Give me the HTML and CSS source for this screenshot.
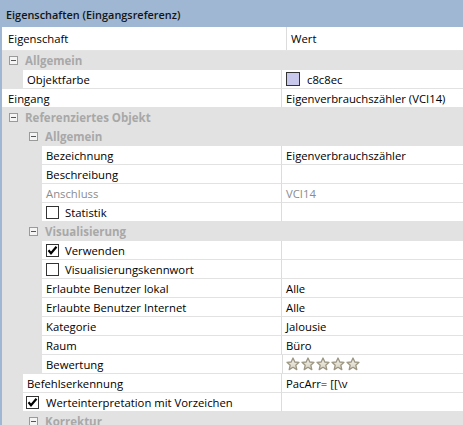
FILE: index.html
```html
<!DOCTYPE html>
<html>
<head>
<meta charset="utf-8">
<link rel="stylesheet" href="styles.css">
</head>
<body>
<div class="panel">
  <div class="title">Eigenschaften (Eingangsreferenz)</div>
  <div class="grid">
    <div class="head"><div class="hn">Eigenschaft</div><div class="hv">Wert</div></div>

    <div class="cat l1"><span class="minus"></span><span class="ct">Allgemein</span></div>
    <div class="row l1"><div class="ind"></div><div class="n">Objektfarbe</div><div class="v"><span class="swatch"></span><span class="sw-t">c8c8ec</span></div></div>
    <div class="row l0"><div class="ind"></div><div class="n">Eingang</div><div class="v">Eigenverbrauchszähler (VCI14)</div></div>
    <div class="cat l1"><span class="minus"></span><span class="ct">Referenziertes Objekt</span></div>
    <div class="cat l2"><span class="minus"></span><span class="ct">Allgemein</span></div>
    <div class="row l2"><div class="ind"></div><div class="n">Bezeichnung</div><div class="v">Eigenverbrauchszähler</div></div>
    <div class="row l2"><div class="ind"></div><div class="n">Beschreibung</div><div class="v"></div></div>
    <div class="row l2 dis"><div class="ind"></div><div class="n">Anschluss</div><div class="v">VCI14</div></div>
    <div class="row l2"><div class="ind"></div><div class="n cb"><span class="box"></span>Statistik</div><div class="v"></div></div>
    <div class="cat l2"><span class="minus"></span><span class="ct">Visualisierung</span></div>
    <div class="row l2"><div class="ind"></div><div class="n cb"><span class="box on"><svg viewBox="0 0 13 13" width="13" height="13"><path d="M2.5 6.3 L5 9.2 L10.5 2.8" fill="none" stroke="#000" stroke-width="2.2"/></svg></span>Verwenden</div><div class="v"></div></div>
    <div class="row l2"><div class="ind"></div><div class="n cb"><span class="box"></span>Visualisierungskennwort</div><div class="v"></div></div>
    <div class="row l2"><div class="ind"></div><div class="n">Erlaubte Benutzer lokal</div><div class="v">Alle</div></div>
    <div class="row l2"><div class="ind"></div><div class="n">Erlaubte Benutzer Internet</div><div class="v">Alle</div></div>
    <div class="row l2"><div class="ind"></div><div class="n">Kategorie</div><div class="v">Jalousie</div></div>
    <div class="row l2"><div class="ind"></div><div class="n">Raum</div><div class="v">Büro</div></div>
    <div class="row l2"><div class="ind"></div><div class="n">Bewertung</div><div class="v stars">
      <svg width="76" height="14" viewBox="0 0 76 14">
        <defs>
          <linearGradient id="sg" x1="0" y1="0" x2="0" y2="1">
            <stop offset="0" stop-color="#f4f2ea"/>
            <stop offset="1" stop-color="#d6d2c2"/>
          </linearGradient>
          <polygon id="st" points="7,1 8.8,5 13,5.3 9.8,8.2 10.8,12.6 7,10.3 3.2,12.6 4.2,8.2 1,5.3 5.2,5" fill="url(#sg)" stroke="#9c9682" stroke-width="1.3" stroke-linejoin="round"/>
        </defs>
        <use href="#st" x="0"/>
        <use href="#st" x="15"/>
        <use href="#st" x="30"/>
        <use href="#st" x="45"/>
        <use href="#st" x="60"/>
      </svg>
    </div></div>
    <div class="row l1"><div class="ind"></div><div class="n">Befehlserkennung</div><div class="v">PacArr= [[\v</div></div>
    <div class="row l1"><div class="ind"></div><div class="n cb"><span class="box on"><svg viewBox="0 0 13 13" width="13" height="13"><path d="M2.5 6.3 L5 9.2 L10.5 2.8" fill="none" stroke="#000" stroke-width="2.2"/></svg></span>Werteinterpretation mit Vorzeichen</div><div class="v"></div></div>
    <div class="cat l2"><span class="minus"></span><span class="ct">Korrektur</span></div>
  </div>
</div>
</body>
</html>
```
FILE: styles.css
```css
html, body {
  margin: 0;
  padding: 0;
  background: #ffffff;
}
body {
  font-family: "Open Sans", "Noto Sans", sans-serif;
  font-size: 11.3px;
  color: #000;
  width: 463px;
  height: 425px;
  overflow: hidden;
}
.panel {
  border-left: 2px solid #9fb7d2;
  height: 425px;
  box-sizing: border-box;
}
.title {
  height: 27px;
  margin-left: -2px;
  padding-left: 6px;
  padding-top: 1px;
  box-sizing: border-box;
  background: #9fb7d2;
  display: flex;
  align-items: center;
  font-weight: 600;
  font-size: 10.9px;
  color: #141414;
  white-space: nowrap;
}
.grid {
  display: flex;
  flex-direction: column;
}
.head {
  display: flex;
  height: 23px;
  border-bottom: 1px solid #e4e4e4;
  background: #fff;
}
.hn {
  width: 278px;
  padding-left: 6px;
  border-right: 1px solid #dcdcdc;
  display: flex;
  align-items: center;
}
.hv {
  flex: 1;
  padding-left: 4px;
  display: flex;
  align-items: center;
}
.cat {
  height: 19px;
  background: #e2e2e2;
  display: flex;
  align-items: center;
  font-weight: 700;
  font-size: 11.5px;
  color: #a8a8a8;
  white-space: nowrap;
}
.cat.l1 { padding-left: 7px; }
.cat.l2 { padding-left: 27px; }
.cat.l1 .ct { margin-left: 7px; }
.cat.l2 .ct { margin-left: 7px; }
.minus {
  width: 9px;
  height: 9px;
  box-sizing: border-box;
  border: 1px solid #9a9a9a;
  background: #f4f4f4;
  position: relative;
  flex: none;
}
.minus::after {
  content: "";
  position: absolute;
  left: 1px;
  right: 1px;
  top: 3px;
  height: 1px;
  background: #555;
}
.row {
  display: flex;
  height: 19px;
  white-space: nowrap;
}
.ind {
  background: #e2e2e2;
  flex: none;
}
.l0 .ind { width: 0; }
.l1 .ind { width: 21px; }
.l2 .ind { width: 40px; }
.n {
  flex: 1;
  padding-left: 4px;
  border-right: 1px solid #dcdcdc;
  border-bottom: 1px solid #e2e2e2;
  display: flex;
  align-items: center;
  overflow: hidden;
}
.l0 .n { padding-left: 6px; }
.v {
  width: 177px;
  flex: none;
  padding-left: 4px;
  border-bottom: 1px solid #e2e2e2;
  display: flex;
  align-items: center;
  overflow: hidden;
}
.dis .n, .dis .v { color: #8c8c8c; }
.box {
  width: 13px;
  height: 13px;
  box-sizing: border-box;
  border: 1px solid #333;
  background: #fff;
  margin-right: 6px;
  flex: none;
  display: flex;
}
.l1 .n.cb { padding-left: 3px; }
.l1 .n.cb .box { margin-right: 7px; }
.box svg { margin: -1px; }
.swatch {
  width: 14px;
  height: 14px;
  box-sizing: border-box;
  border: 1px solid #333;
  background: #c8c8ec;
  margin-right: 7px;
  flex: none;
}
.stars { padding-left: 3px; }
.stars svg { display: block; }
```
